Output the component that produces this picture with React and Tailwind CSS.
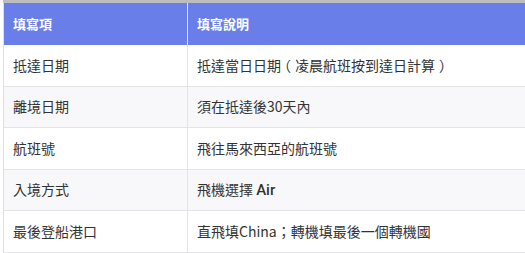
import React from 'react';

const rows = [
  {
    item: '抵達日期',
    desc: (
      <span>
        抵達當日日期
        <span className="ml-[3px] mr-[4px] [font-feature-settings:'halt']">（</span>
        凌晨航班按到達日計算
        <span className="ml-[4px] mr-[3px] [font-feature-settings:'halt']">）</span>
      </span>
    ),
  },
  { item: '離境日期', desc: '須在抵達後30天內' },
  { item: '航班號', desc: '飛往馬來西亞的航班號' },
  {
    item: '入境方式',
    desc: (
      <span>
        飛機選擇 <span className="font-['Roboto','Liberation_Sans',sans-serif] text-[15px] font-medium">Air</span>
      </span>
    ),
  },
  { item: '最後登船港口', desc: '直飛填China；轉機填最後一個轉機國' },
];

export default function App() {
  return (
    <div className="h-[253px] w-[525px] overflow-hidden bg-white pl-[3px] font-['Noto_Sans_CJK_TC','Noto_Sans',sans-serif] text-[#333]">
      <div className="border-t-[3px] border-[#bdbdbd]">
        <div className="grid grid-cols-[184px_1fr] border-l border-[#e0e0e0]">
          <div className="flex h-[42px] items-center border-r border-[#e8e8f0] bg-[#6a7eea] px-[9px] text-[13px] font-bold text-white">
            填寫項
          </div>
          <div className="flex h-[42px] items-center bg-[#6a7eea] px-[9px] text-[13px] font-bold text-white">
            填寫說明
          </div>
          {rows.map((r, i) => {
            const bg = i % 2 === 1 ? 'bg-[#f8f8fb]' : 'bg-white';
            return (
              <React.Fragment key={i}>
                <div className={`flex h-[41.5px] items-center border-r border-b border-[#e4e4e8] px-[9px] text-[14px] ${bg}`}>
                  {r.item}
                </div>
                <div className={`flex h-[41.5px] items-center border-b border-[#e4e4e8] px-[9px] text-[14px] ${bg}`}>
                  {r.desc}
                </div>
              </React.Fragment>
            );
          })}
        </div>
      </div>
    </div>
  );
}
